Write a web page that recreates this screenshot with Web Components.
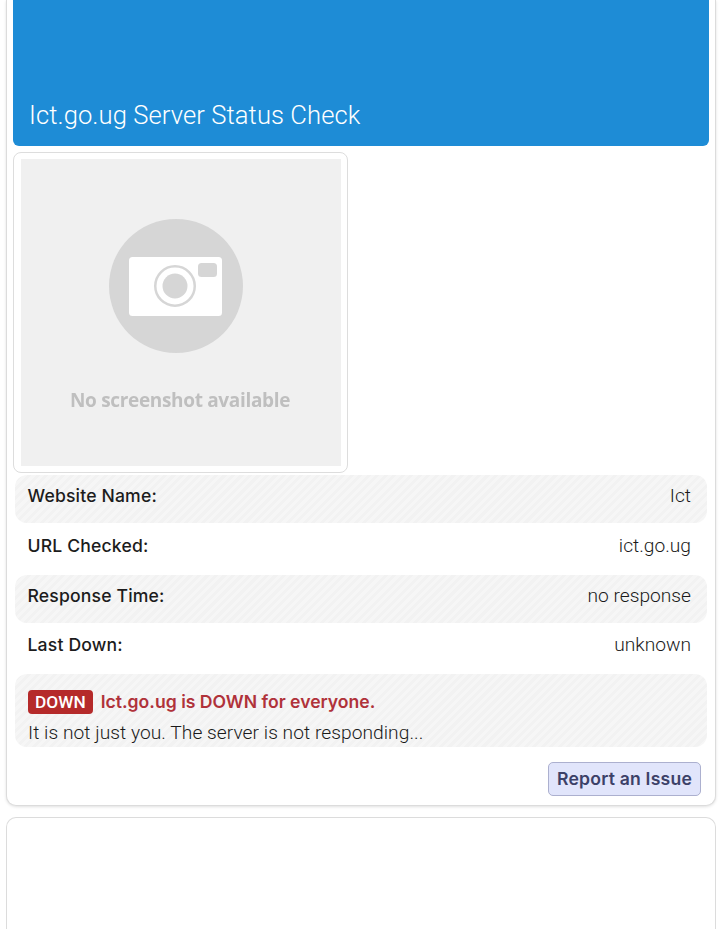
<!DOCTYPE html>
<html lang="en">
<head>
<meta charset="utf-8">
<title>Ict.go.ug Server Status Check</title>
<style>
  html, body { margin: 0; padding: 0; background: #fff; height: 929px; overflow: hidden; }
  body { font-family: Roboto, "Liberation Sans", sans-serif; }
</style>
</head>
<body>
<status-card>
  <page-banner>Ict.go.ug Server Status Check</page-banner>
  <shot-box></shot-box>
  <info-row label="Website Name:" striped style="height:48px;margin-top:2px">Ict</info-row>
  <info-row label="URL Checked:" style="height:52px">ict.go.ug</info-row>
  <info-row label="Response Time:" striped style="height:48px">no response</info-row>
  <info-row label="Last Down:" style="height:51px;padding-bottom:8px">unknown</info-row>
  <down-notice>
    <span slot="title">Ict.go.ug is DOWN for everyone.</span>
    It is not just you. The server is not responding...
  </down-notice>
  <issue-button>Report an Issue</issue-button>
</status-card>
<empty-card></empty-card>

<script>
const stripes = `repeating-linear-gradient(135deg, #f6f6f6 0, #f6f6f6 3px, #f2f2f2 3px, #f2f2f2 6px)`;

customElements.define('status-card', class extends HTMLElement {
  constructor() {
    super();
    this.attachShadow({mode: 'open'}).innerHTML = `
      <style>
        :host {
          display: flex;
          flex-direction: column;
          box-sizing: border-box;
          width: 710px;
          height: 806px;
          margin-left: 6px;
          padding: 0 6px 9px;
          background: #fff;
          border: 1px solid #dcdcdc;
          border-top: 0;
          border-radius: 0 0 10px 10px;
          box-shadow: 0 1px 3px rgba(0,0,0,.12);
        }
      </style>
      <slot></slot>`;
  }
});

customElements.define('page-banner', class extends HTMLElement {
  constructor() {
    super();
    this.attachShadow({mode: 'open'}).innerHTML = `
      <style>
        :host {
          display: flex;
          align-items: flex-end;
          box-sizing: border-box;
          height: 146px;
          padding: 0 16px 15px;
          background: #1e8cd6;
          color: #fff;
          border-radius: 0 0 6px 6px;
          font: 300 25.6px/32px Roboto, sans-serif;
          letter-spacing: .07px;
        }
      </style>
      <slot></slot>`;
  }
});

customElements.define('shot-box', class extends HTMLElement {
  constructor() {
    super();
    this.attachShadow({mode: 'open'}).innerHTML = `
      <style>
        :host {
          display: block;
          box-sizing: border-box;
          width: 335px;
          height: 322px;
          margin-top: 6px;
          padding: 6px 6px 6px 7px;
          border: 1px solid #dddddd;
          border-radius: 8px;
        }
        .pic {
          display: flex;
          flex-direction: column;
          align-items: flex-start;
          width: 320px;
          height: 307px;
          background: #f0f0f0;
        }
        svg { display: block; margin: 60px 0 0 88px; }
        .txt {
          margin: 35px 0 0 49px;
          font: 700 19px/24px "Open Sans", sans-serif;
          letter-spacing: -.33px;
          white-space: nowrap;
          color: #bfbfbf;
          filter: blur(.6px);
        }
      </style>
      <div class="pic">
        <svg width="134" height="134" viewBox="0 0 134 134">
          <circle cx="67" cy="67" r="67" fill="#d6d6d6"/>
          <rect x="20" y="38" width="93" height="59" rx="3.5" fill="#fff"/>
          <rect x="89" y="44" width="19" height="14" rx="3.5" fill="#d6d6d6"/>
          <circle cx="66" cy="67" r="19.75" fill="none" stroke="#d6d6d6" stroke-width="2.5"/>
          <circle cx="66" cy="67" r="12.5" fill="#d6d6d6"/>
        </svg>
        <div class="txt">No screenshot available</div>
      </div>`;
  }
});

customElements.define('info-row', class extends HTMLElement {
  constructor() {
    super();
    this.attachShadow({mode: 'open'}).innerHTML = `
      <style>
        :host {
          display: flex;
          justify-content: space-between;
          align-items: center;
          box-sizing: border-box;
          margin: 0 2px;
          padding: 0 16px 6px 12.5px;
          border-radius: 12px;
          color: #1a1a1a;
        }
        :host([striped]) { background: ${stripes}; }
        .label { font: 500 17.6px/24px Inter, sans-serif; color: #1c1c1c; letter-spacing: .16px; }
        .value { font: 300 19.2px/24px Roboto, sans-serif; }
      </style>
      <span class="label"></span>
      <span class="value"><slot></slot></span>`;
    this.shadowRoot.querySelector('.label').textContent = this.getAttribute('label');
  }
});

customElements.define('down-notice', class extends HTMLElement {
  constructor() {
    super();
    this.attachShadow({mode: 'open'}).innerHTML = `
      <style>
        :host {
          display: block;
          box-sizing: border-box;
          height: 73px;
          margin: 0 2px;
          padding: 16px 13px 0;
          border-radius: 12px;
          background: ${stripes};
          font: 300 19.2px/24px Roboto, sans-serif;
          letter-spacing: .04px;
          color: #1a1a1a;
        }
        .head { display: flex; align-items: center; gap: 8px; height: 24px; margin-bottom: 7px; letter-spacing: 0; }
        .badge {
          box-sizing: border-box;
          height: 24px;
          padding: 0 7px;
          border-radius: 4px;
          background: #b52a2a;
          color: #fff;
          font: 500 17.3px/24px Roboto, sans-serif;
        }
        .title { font: 600 17.6px/24px Inter, sans-serif; color: #b0323a; }
      </style>
      <div class="head"><span class="badge">DOWN</span><span class="title"><slot name="title"></slot></span></div>
      <slot></slot>`;
  }
});

customElements.define('issue-button', class extends HTMLElement {
  constructor() {
    super();
    this.attachShadow({mode: 'open'}).innerHTML = `
      <style>
        :host {
          display: flex;
          align-self: flex-end;
          align-items: center;
          box-sizing: border-box;
          height: 34px;
          margin: 15px 8px 0 0;
          padding: 0 8px;
          background: #e1e5fb;
          border: 1px solid #acb0cf;
          border-radius: 5px;
          color: #3c4168;
          font: 600 17.6px/24px Inter, sans-serif;
          letter-spacing: .2px;
        }
      </style>
      <slot></slot>`;
  }
});

customElements.define('empty-card', class extends HTMLElement {
  constructor() {
    super();
    this.attachShadow({mode: 'open'}).innerHTML = `
      <style>
        :host {
          display: block;
          box-sizing: border-box;
          width: 710px;
          height: 112px;
          margin: 11px 0 0 6px;
          background: #fff;
          border: 1px solid #dcdcdc;
          border-bottom: 0;
          border-radius: 10px 10px 0 0;
        }
      </style>`;
  }
});
</script>
</body>
</html>
